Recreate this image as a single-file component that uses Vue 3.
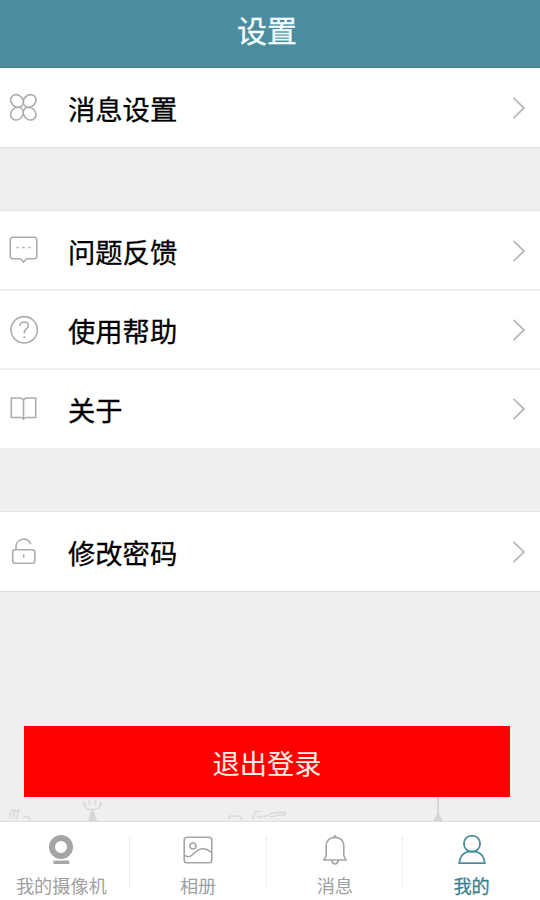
<template>
  <div class="settings-page">
    <header class="navbar">设置</header>

    <main class="content">
      <section v-for="(group, index) in groups" :key="index" class="group">
        <div v-for="item in group" :key="item.label" class="row">
          <svg class="row-icon" viewBox="0 0 31 31">
            <path v-for="d in item.paths" :key="d" :d="d" />
          </svg>
          <span class="row-label">{{ item.label }}</span>
          <svg class="chevron" viewBox="0 0 14 24">
            <path d="M1.5 1.8L12 12L1.5 22.2" />
          </svg>
        </div>
      </section>

      <button class="logout">退出登录</button>

      <!-- skyline that rises behind the tab bar -->
      <svg class="skyline" viewBox="0 0 540 24">
        <path d="M9 22l3-9h3l-2 8M15 14l4-1-3 9M23 21q4-4 8 2" />
        <path d="M84 4l2 7 5 2M89 3l1 5M101 4l-2 7-5 2M96 3l-1 5M83 7l4 5M102 7l-4 5" />
        <path class="solid" d="M92 11h1l4 13h-9z" />
        <path d="M228 22q4-6 7-2q4-3 8 3M252 22q3-3 3-7l6-1M257 20q10 0 15-4l13-1q3 3-5 3l-10 2" />
        <path class="solid" d="M437 0h2v17l4 7h-10l4-7z" />
      </svg>
    </main>

    <nav class="tabbar">
      <a
        v-for="tab in tabs"
        :key="tab.label"
        class="tab"
        :class="{ active: tab.label === current }"
        @click="current = tab.label"
      >
        <svg class="tab-icon" :class="{ heavy: tab.heavy }" viewBox="0 0 32 32">
          <path v-for="d in tab.paths" :key="d" :d="d" />
        </svg>
        <span>{{ tab.label }}</span>
      </a>
    </nav>
  </div>
</template>

<script setup>
import { ref } from 'vue'

const current = ref('我的')

const groups = [
  [
    {
      label: '消息设置',
      paths: [
        'M13.8 13.8A6.8 5.5 45 1 1 4.2 4.2A6.8 5.5 45 1 1 13.8 13.8',
        'M16.8 13.8A6.8 5.5 -45 1 1 26.4 4.2A6.8 5.5 -45 1 1 16.8 13.8',
        'M13.8 16.8A6.8 5.5 -45 1 1 4.2 26.4A6.8 5.5 -45 1 1 13.8 16.8',
        'M16.8 16.8A6.8 5.5 45 1 1 26.4 26.4A6.8 5.5 45 1 1 16.8 16.8'
      ]
    }
  ],
  [
    {
      label: '问题反馈',
      paths: [
        'M5 2.3H26Q28.8 2.3 28.8 5V21Q28.8 23.8 26 23.8H18.5L15.5 27L12.5 23.8H5Q2.3 23.8 2.3 21V5Q2.3 2.3 5 2.3Z',
        'M8.5 12.5h2.2M14.4 12.5h2.2M20.3 12.5h2.2'
      ]
    },
    {
      label: '使用帮助',
      paths: [
        'M3 15.8A13.2 13.2 0 1 1 29.4 15.8A13.2 13.2 0 1 1 3 15.8',
        'M12 12Q12 8 16.2 8Q20.3 8 20.3 11.7Q20.3 13.5 18 15.2Q16.3 16.6 16.3 19.5M16.3 22v2'
      ]
    },
    {
      label: '关于',
      paths: [
        'M15.5 7Q14.5 5 11.5 5H3.3V24.5H12.5Q14.5 24.5 15.5 26Q16.5 24.5 18.5 24.5H27.7V5H19.5Q16.5 5 15.5 7V26'
      ]
    }
  ],
  [
    {
      label: '修改密码',
      paths: [
        'M7 13.8H24.5Q26.8 13.8 26.8 16V25Q26.8 27.3 24.5 27.3H7Q4.7 27.3 4.7 25V16Q4.7 13.8 7 13.8Z',
        'M8 13.5V10.5A7.6 7.6 0 0 1 22.8 8.3',
        'M15.7 18.3v3.5'
      ]
    }
  ]
]

const tabs = [
  {
    label: '我的摄像机',
    heavy: true,
    paths: ['M7 13A9 9 0 1 1 25 13A9 9 0 1 1 7 13', 'M8.5 28.3H24.3']
  },
  {
    label: '相册',
    paths: [
      'M5 3.2H27Q29.8 3.2 29.8 6V26Q29.8 28.8 27 28.8H5Q2.2 28.8 2.2 26V6Q2.2 3.2 5 3.2Z',
      'M8 12A3 3 0 1 1 14 12A3 3 0 1 1 8 12',
      'M2.5 21Q6 24.5 10 21Q16.5 14.5 21 14.5Q25.5 15 29.5 18.5'
    ]
  },
  {
    label: '消息',
    paths: [
      'M5 26L7.2 21.5V12Q7.5 3.5 16 3.5Q24.5 3.5 24.8 12V21.5L27 26Z',
      'M14.5 3.5L16 1.8L17.5 3.5',
      'M12.5 26.5Q13.5 30 16 30Q18.5 30 19.5 26.5'
    ]
  },
  {
    label: '我的',
    paths: [
      'M7.9 9.7A8.1 8.1 0 1 1 24.1 9.7A8.1 8.1 0 1 1 7.9 9.7',
      'M10.5 18.2Q4 20.5 3.3 29.2H28.7Q28 20.5 21.5 18.2Q16 16.5 10.5 18.2'
    ]
  }
]
</script>

<style>
body {
  margin: 0;
}
</style>

<style scoped>
.settings-page {
  display: flex;
  flex-direction: column;
  height: 900px;
  overflow: hidden;
  background: #efefef;
  font-family: "Noto Sans CJK SC", sans-serif;
}

.navbar {
  height: 67px;
  border-bottom: 1px solid #43808f;
  background: #4b8d9f;
  color: #f4ffff;
  font-size: 30px;
  line-height: 58px;
  text-align: center;
  text-indent: -6px;
  -webkit-text-stroke: 0.3px;
}

.content {
  flex: 1;
  display: flex;
  flex-direction: column;
}

.group {
  background: #fff;
  border-top: 1px solid #e4e4e4;
  border-bottom: 1px solid #dedede;
  margin-bottom: 63px;
}

.group:first-child {
  border-top: none;
  margin-bottom: 62px;
}

.group:nth-child(2) {
  border-bottom: none;
}

.row {
  display: flex;
  align-items: center;
  box-sizing: border-box;
  height: 79px;
  padding: 0 14px 0 8px;
}

.row + .row {
  box-shadow: inset 0 1px #eeeeee, 0 -1px #f2f2f2;
}

.row-icon {
  width: 31px;
  height: 31px;
  fill: none;
  stroke: #adadad;
  stroke-width: 1.6;
}

.row-label {
  flex: 1;
  margin-left: 29px;
  padding-top: 1px;
  color: #000;
  font-size: 27.3px;
  line-height: 40px;
  -webkit-text-stroke: 0.3px;
}

.chevron {
  width: 14px;
  height: 24px;
  fill: none;
  stroke: #b9b9b9;
  stroke-width: 1.8;
}

.logout {
  height: 71px;
  margin: 71px 30px 0 24px;
  padding: 0;
  border: none;
  background: #ff0000;
  color: #fff0e8;
  font-family: inherit;
  font-size: 27.3px;
}

.skyline {
  width: 540px;
  height: 24px;
  fill: none;
  stroke: #dadada;
  stroke-width: 1.5;
}

.skyline .solid {
  fill: #d6d6d6;
  stroke: none;
}

.tabbar {
  display: flex;
  height: 78px;
  margin-left: -7px;
  border-top: 1px solid #dedede;
  background: #fff;
}

.tab {
  flex: 1;
  display: flex;
  flex-direction: column;
  align-items: center;
  padding-top: 12px;
  color: #a0a0a0;
  font-size: 18.2px;
  line-height: 39px;
  background: linear-gradient(#ededed, #ededed) right 14px / 1px 52px no-repeat;
}

.tab:last-child {
  background: none;
}

.tab-icon {
  flex: none;
  width: 32px;
  height: 32px;
  fill: none;
  stroke: #a5a5a5;
  stroke-width: 1.6;
}

.tab-icon.heavy {
  stroke-width: 6;
}

.tab-icon.heavy path:last-child {
  stroke-width: 3.5;
}

.tab.active {
  color: #3c7f92;
  -webkit-text-stroke: 0.3px;
}

.tab.active .tab-icon {
  stroke: #4b8d9f;
  stroke-width: 1.8;
}
</style>
